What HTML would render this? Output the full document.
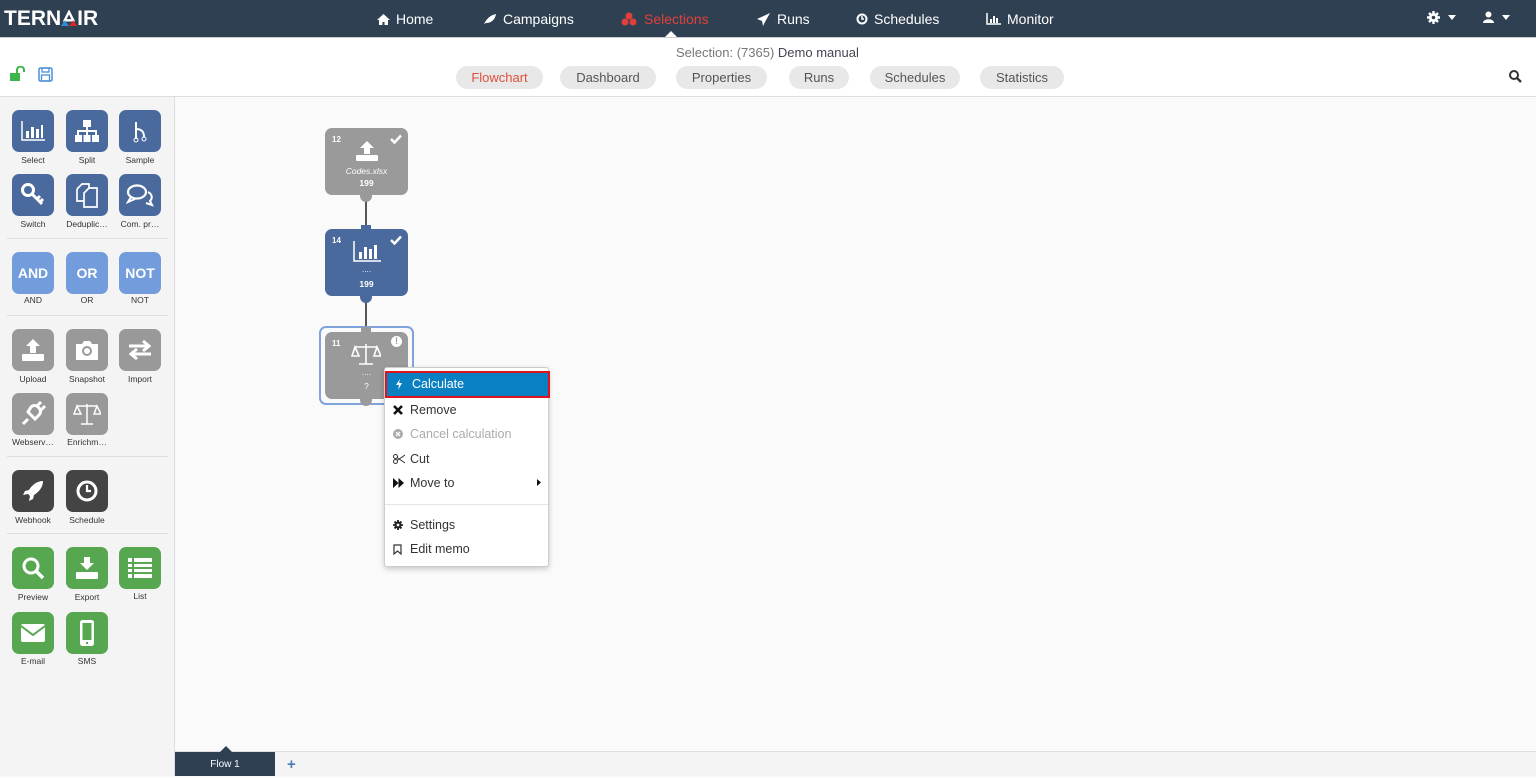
<!DOCTYPE html>
<html><head><meta charset="utf-8"><style>
*{box-sizing:border-box;margin:0;padding:0}
body{width:1536px;height:776px;overflow:hidden;font-family:"Liberation Sans",sans-serif;background:#fafafa;position:relative}
.nav{position:absolute;left:0;top:0;width:1536px;height:37px;background:#2f4052}
.logo{position:absolute;left:4px;top:7px;color:#fff;font-weight:bold;font-size:21px;letter-spacing:0px}
.ni{position:absolute;top:11px;color:#fff;font-size:14px;display:flex;align-items:center;gap:6px}
.sub{position:absolute;left:0;top:37px;width:1536px;height:60px;background:#fff;border-bottom:1px solid #ddd;border-top:1px solid #ccc}
.tab{position:absolute;top:28px;height:23px;border-radius:12px;background:#e8e8e8;color:#555;font-size:13px;text-align:center;line-height:23px}
.side{position:absolute;left:0;top:97px;width:175px;height:679px;background:#f4f4f4;border-right:1px solid #ddd}
.t{position:absolute;width:42px;height:42px;border-radius:7px;display:flex;align-items:center;justify-content:center;color:#fff}
.l{position:absolute;width:54px;text-align:center;font-size:8.5px;color:#333;white-space:nowrap;overflow:hidden}
.sep{position:absolute;left:7px;width:161px;height:1px;background:#ddd}
.b{background:#4a6a9d}.lb{background:#729cdb;font-size:14px;font-weight:bold}.g{background:#999}.d{background:#444}.gr{background:#56a74f}
.node{position:absolute;left:325px;width:83px;height:67px;border-radius:7px;color:#fff;text-align:center}
.num{position:absolute;left:7px;top:7px;font-size:8px;font-weight:bold}
.dot{position:absolute;width:12px;height:12px;border-radius:6px;left:360px}
.menu{position:absolute;left:384px;top:367px;width:165px;height:200px;background:#fff;border:1px solid #ccc;border-radius:3px;box-shadow:0 2px 6px rgba(0,0,0,.2)}
.mi{position:absolute;left:0;width:163px;height:24px;font-size:12.5px;color:#333;line-height:24px;padding-left:25px}
.mi svg{position:absolute;left:8px;top:7px}
</style></head><body>
<div class="nav">
<div class="logo">TERN<span style="position:relative;display:inline-block;width:16px;height:15px;vertical-align:-1px"><svg width="16" height="16" viewBox="0 0 17 17"><path d="M8.5 2L4 11h9z" fill="none" stroke="#fff" stroke-width="2.5"/><path d="M4 11L0 17h8.5z" fill="#2e8fd6"/><path d="M13 11l4 6H8.5z" fill="#e0262b"/></svg></span>IR</div>
<div class="ni" style="left:377px"><svg width="13" height="11"><path d="M6.5 0L0 6h2v5h3.5V8h2v3H11V6h2z" fill="#fff"/></svg>Home</div>
<div class="ni" style="left:483px"><svg width="14" height="12"><path d="M1 11C4 5 8 2 13 1C12 7 8 10 3 10" fill="#fff"/></svg>Campaigns</div>
<div class="ni" style="left:621px;color:#e0403a"><svg width="17" height="14"><circle cx="8" cy="4" r="3.5" fill="#e0403a"/><circle cx="4" cy="10" r="3.5" fill="#e0403a"/><circle cx="12" cy="10" r="3.5" fill="#e0403a"/></svg>Selections</div>
<div style="position:absolute;left:665px;top:31px;border:6px solid transparent;border-bottom-color:#fff;border-top:0"></div>
<div class="ni" style="left:757px"><svg width="14" height="13"><path d="M13 0L0 6l5 2 1 5 2-4z" fill="#fff"/></svg>Runs</div>
<div class="ni" style="left:856px"><svg width="12" height="12"><circle cx="6" cy="6" r="4.5" stroke="#fff" stroke-width="2" fill="none"/><path d="M6 3v3h2" stroke="#fff" stroke-width="1.5" fill="none"/></svg>Schedules</div>
<div class="ni" style="left:986px"><svg width="15" height="12"><path d="M1 0v11h14" stroke="#fff" stroke-width="1.5" fill="none"/><rect x="4" y="6" width="2" height="4" fill="#fff"/><rect x="7" y="3" width="2" height="7" fill="#fff"/><rect x="10" y="5" width="2" height="5" fill="#fff"/></svg>Monitor</div>
<div class="ni" style="left:1427px;gap:8px"><svg width="13" height="13" viewBox="0 0 13 13"><circle cx="6.5" cy="6.5" r="4.5" fill="#fff"/><g stroke="#fff" stroke-width="2.4"><path d="M6.5 0v13M0 6.5h13M2 2l9 9M11 2l-9 9"/></g><circle cx="6.5" cy="6.5" r="1.8" fill="#2f4052"/></svg><svg width="8" height="5"><path d="M0 0h8L4 5z" fill="#fff"/></svg></div>
<div class="ni" style="left:1483px;gap:8px"><svg width="11" height="12"><circle cx="5.5" cy="3.5" r="3" fill="#fff"/><path d="M0 12c0-5 11-5 11 0z" fill="#fff"/></svg><svg width="8" height="5"><path d="M0 0h8L4 5z" fill="#fff"/></svg></div>
</div>
<div class="sub">
<div style="position:absolute;left:676px;top:7px;font-size:13px;color:#777">Selection: (7365) <span style="color:#445">Demo manual</span></div>
<svg style="position:absolute;left:9px;top:28px" width="18" height="16"><rect x="1" y="7" width="10" height="8" fill="#3cb54a"/><path d="M8 7V4a3 3 0 0 1 7 0v2" stroke="#3cb54a" stroke-width="2" fill="none"/></svg>
<svg style="position:absolute;left:38px;top:29px" width="15" height="15"><rect x="1" y="1" width="13" height="13" rx="1.5" fill="none" stroke="#4a90d9" stroke-width="1.5"/><rect x="4" y="1" width="7" height="4" fill="none" stroke="#4a90d9" stroke-width="1.3"/><rect x="3.5" y="8" width="8" height="6" fill="none" stroke="#4a90d9" stroke-width="1.3"/></svg>
<div class="tab" style="left:456px;width:87px;color:#e0503e">Flowchart</div>
<div class="tab" style="left:560px;width:96px">Dashboard</div>
<div class="tab" style="left:676px;width:91px">Properties</div>
<div class="tab" style="left:789px;width:60px">Runs</div>
<div class="tab" style="left:870px;width:90px">Schedules</div>
<div class="tab" style="left:980px;width:84px">Statistics</div>
<svg style="position:absolute;left:1509px;top:32px" width="13" height="13"><circle cx="5" cy="5" r="4" stroke="#333" stroke-width="2" fill="none"/><path d="M8 8l4 4" stroke="#333" stroke-width="2.3"/></svg>
</div>
<div class="side">
<div class="t b" style="left:12px;top:13px"><svg width="24" height="20"><path d="M1 0v19h23" stroke="#fff" stroke-width="1.5" fill="none"/><rect x="5" y="10" width="3" height="7" fill="#fff"/><rect x="10" y="6" width="3" height="11" fill="#fff"/><rect x="15" y="8" width="3" height="9" fill="#fff"/><rect x="20" y="4" width="2" height="13" fill="#fff"/></svg></div><div class="l" style="left:6px;top:58px">Select</div>
<div class="t b" style="left:66px;top:13px"><svg width="26" height="24"><rect x="9" y="1" width="8" height="7" fill="#fff"/><path d="M13 8v4M4 16v-4h18v4M13 12v4" stroke="#fff" stroke-width="2" fill="none"/><rect x="1" y="16" width="7" height="7" fill="#fff"/><rect x="9.5" y="16" width="7" height="7" fill="#fff"/><rect x="18" y="16" width="7" height="7" fill="#fff"/></svg></div><div class="l" style="left:60px;top:58px">Split</div>
<div class="t b" style="left:119px;top:13px"><svg width="16" height="24"><path d="M4 3v17M4 10c6 0 8 3 8 8" stroke="#fff" stroke-width="2" fill="none"/><circle cx="4" cy="21" r="2" fill="none" stroke="#fff"/><circle cx="12" cy="20" r="2" fill="none" stroke="#fff"/></svg></div><div class="l" style="left:113px;top:58px">Sample</div>
<div class="t b" style="left:12px;top:77px"><svg width="26" height="26"><circle cx="8" cy="8" r="5.5" stroke="#fff" stroke-width="3" fill="none"/><path d="M12 12l10 10M17 17l3-3M20 20l3-3" stroke="#fff" stroke-width="3"/></svg></div><div class="l" style="left:6px;top:122px">Switch</div>
<div class="t b" style="left:66px;top:77px"><svg width="24" height="26"><path d="M2 7l5-5h7v5M2 7v12h7" stroke="#fff" stroke-width="1.7" fill="none"/><path d="M9 11l5-5h8v19H9z" stroke="#fff" stroke-width="1.7" fill="none"/></svg></div><div class="l" style="left:60px;top:122px">Deduplic…</div>
<div class="t b" style="left:119px;top:77px"><svg width="28" height="24"><ellipse cx="11" cy="9" rx="9" ry="6.5" stroke="#fff" stroke-width="2.2" fill="none"/><path d="M5 14l-3 5 7-3M22 9c4 2 5 6 2 9l2 4-6-2" stroke="#fff" stroke-width="2" fill="none"/></svg></div><div class="l" style="left:113px;top:122px">Com. pr…</div>
<div class="sep" style="top:141px"></div>
<div class="t lb" style="left:12px;top:155px">AND</div><div class="l" style="left:6px;top:198px">AND</div>
<div class="t lb" style="left:66px;top:155px">OR</div><div class="l" style="left:60px;top:198px">OR</div>
<div class="t lb" style="left:119px;top:155px">NOT</div><div class="l" style="left:113px;top:198px">NOT</div>
<div class="sep" style="top:218px"></div>
<div class="t g" style="left:12px;top:232px"><svg width="24" height="24"><path d="M12 1l-7 7h4v7h6V8h4z" fill="#fff"/><rect x="1" y="16" width="22" height="7" rx="1" fill="#fff"/></svg></div><div class="l" style="left:6px;top:277px">Upload</div>
<div class="t g" style="left:66px;top:232px"><svg width="26" height="22"><path d="M2 5h6l2-3h6l2 3h6v16H2z" fill="#fff"/><circle cx="13" cy="12" r="5" fill="#999"/><circle cx="13" cy="12" r="3" fill="#fff"/></svg></div><div class="l" style="left:60px;top:277px">Snapshot</div>
<div class="t g" style="left:119px;top:232px"><svg width="26" height="22"><path d="M2 7h18M16 2l6 5-6 5M24 15H6M10 10l-6 5 6 5" stroke="#fff" stroke-width="3" fill="none"/></svg></div><div class="l" style="left:113px;top:277px">Import</div>
<div class="t g" style="left:12px;top:296px"><svg width="26" height="26"><path d="M3 23l5-5M8 11l7 7 4-4c2-2 2-5 0-7l-1-1c-2-2-5-2-7 0zM16 6l5-5M20 10l5-5" stroke="#fff" stroke-width="3" fill="none"/></svg></div><div class="l" style="left:6px;top:340px">Webserv…</div>
<div class="t g" style="left:66px;top:296px"><svg width="28" height="24"><path d="M14 2v20M4 4h20M8 22h12M4 4l-3 8h7zM24 4l-3 8h7z" stroke="#fff" stroke-width="1.5" fill="none"/></svg></div><div class="l" style="left:60px;top:340px">Enrichm…</div>
<div class="sep" style="top:359px"></div>
<div class="t d" style="left:12px;top:373px"><svg width="24" height="24"><path d="M22 2c-6 0-11 4-14 9l-4 1-2 4 5-1 2 2-1 5 4-2 1-4c5-3 9-8 9-14z" fill="#fff"/></svg></div><div class="l" style="left:6px;top:418px">Webhook</div>
<div class="t d" style="left:66px;top:373px"><svg width="24" height="24"><circle cx="12" cy="12" r="9" stroke="#fff" stroke-width="3" fill="none"/><path d="M12 6v6h4" stroke="#fff" stroke-width="2.2" fill="none"/></svg></div><div class="l" style="left:60px;top:418px">Schedule</div>
<div class="sep" style="top:436px"></div>
<div class="t gr" style="left:12px;top:450px"><svg width="24" height="24"><circle cx="10" cy="10" r="7" stroke="#fff" stroke-width="3" fill="none"/><path d="M15 15l7 7" stroke="#fff" stroke-width="3.5"/></svg></div><div class="l" style="left:6px;top:495px">Preview</div>
<div class="t gr" style="left:66px;top:450px"><svg width="24" height="24"><path d="M12 14l-7-7h4V1h6v6h4z" fill="#fff"/><rect x="1" y="16" width="22" height="7" rx="1" fill="#fff"/></svg></div><div class="l" style="left:60px;top:495px">Export</div>
<div class="t gr" style="left:119px;top:450px"><svg width="26" height="22"><g fill="#fff"><rect x="1" y="1" width="4" height="4"/><rect x="7" y="1" width="18" height="4"/><rect x="1" y="7" width="4" height="3"/><rect x="7" y="7" width="18" height="3"/><rect x="1" y="12" width="4" height="3"/><rect x="7" y="12" width="18" height="3"/><rect x="1" y="17" width="4" height="4"/><rect x="7" y="17" width="18" height="4"/></g></svg></div><div class="l" style="left:113px;top:494px">List</div>
<div class="t gr" style="left:12px;top:515px"><svg width="26" height="20"><rect x="1" y="1" width="24" height="18" rx="2" fill="#fff"/><path d="M1 3l12 9 12-9" stroke="#56a74f" stroke-width="2" fill="none"/></svg></div><div class="l" style="left:6px;top:559px">E-mail</div>
<div class="t gr" style="left:66px;top:515px"><svg width="16" height="28"><rect x="1" y="1" width="14" height="26" rx="2.5" fill="#fff"/><rect x="3.5" y="4" width="9" height="17" fill="#56a74f"/><circle cx="8" cy="24" r="1.2" fill="#56a74f"/></svg></div><div class="l" style="left:60px;top:559px">SMS</div>
</div>
<div style="position:absolute;left:365px;top:196px;width:2px;height:33px;background:#555"></div>
<div style="position:absolute;left:365px;top:297px;width:2px;height:35px;background:#555"></div>
<div style="position:absolute;left:319px;top:326px;width:95px;height:79px;border:2px solid #7fa3dd;border-radius:7px"></div>
<div class="node" style="top:128px;background:#9a9a9a"><span class="num">12</span><svg style="position:absolute;right:6px;top:6px" width="12" height="10"><path d="M1 5l3.5 3.5L11 1.5" stroke="#fff" stroke-width="2.5" fill="none"/></svg>
<svg style="position:absolute;left:30px;top:12px" width="24" height="22"><path d="M12 1l-7 7h4v6h6V8h4z" fill="#fff"/><rect x="1" y="15" width="22" height="6" rx="1" fill="#fff"/></svg>
<div style="position:absolute;top:38px;width:100%;font-size:8.5px;font-style:italic">Codes.xlsx</div><div style="position:absolute;top:50px;width:100%;font-size:8.5px;font-weight:bold">199</div></div>
<div class="dot" style="top:190px;background:#9a9a9a"></div>
<div style="position:absolute;left:361px;top:225px;width:10px;height:8px;background:#4a6a9d"></div>
<div class="node" style="top:229px;background:#4a6a9d"><span class="num">14</span><svg style="position:absolute;right:6px;top:6px" width="12" height="10"><path d="M1 5l3.5 3.5L11 1.5" stroke="#fff" stroke-width="2.5" fill="none"/></svg>
<svg style="position:absolute;left:28px;top:12px" width="28" height="22"><path d="M1 0v20h27" stroke="#fff" stroke-width="1.5" fill="none"/><rect x="6" y="11" width="3" height="7" fill="#fff"/><rect x="11" y="6" width="3" height="12" fill="#fff"/><rect x="16" y="8" width="3" height="10" fill="#fff"/><rect x="21" y="4" width="3" height="14" fill="#fff"/></svg>
<div style="position:absolute;top:36px;width:100%;font-size:8px">....</div><div style="position:absolute;top:50px;width:100%;font-size:8.5px;font-weight:bold">199</div></div>
<div class="dot" style="top:291px;background:#4a6a9d"></div>
<div style="position:absolute;left:361px;top:327px;width:10px;height:8px;background:#9a9a9a"></div>
<div class="node" style="top:332px;background:#9a9a9a"><span class="num">11</span><span style="position:absolute;right:6px;top:4px;width:11px;height:11px;border-radius:6px;background:#fff;color:#9a9a9a;font-size:9px;font-weight:bold;line-height:11px">!</span>
<svg style="position:absolute;left:26px;top:10px" width="30" height="24"><path d="M15 2v20M4 5h22M8 22h14M4 5l-3 9h7zM26 5l-3 9h7z" stroke="#fff" stroke-width="1.6" fill="none"/></svg>
<div style="position:absolute;top:36px;width:100%;font-size:8px">....</div><div style="position:absolute;top:49px;width:100%;font-size:8.5px">?</div></div>
<div class="dot" style="top:394px;background:#9a9a9a"></div>
<div class="menu">
<div class="mi" style="top:3px;left:0px;width:165px;height:27px;background:#0a80c2;color:#fff;border:2px solid #e0121c;line-height:23px"><svg style="top:6px" width="8" height="11"><path d="M5 0L1 6h3l-1 5 4-7H4z" fill="#fff"/></svg>Calculate</div>
<div class="mi" style="top:30px"><svg width="10" height="10"><path d="M1 1l8 8M9 1L1 9" stroke="#111" stroke-width="2.6"/></svg>Remove</div>
<div class="mi" style="top:54px;color:#aaa"><svg width="10" height="10"><circle cx="5" cy="5" r="5" fill="#aaa"/><path d="M3 3l4 4M7 3L3 7" stroke="#fff" stroke-width="1.4"/></svg>Cancel calculation</div>
<div class="mi" style="top:79px"><svg width="12" height="10"><circle cx="2.5" cy="2.5" r="2" stroke="#333" fill="none"/><circle cx="2.5" cy="7.5" r="2" stroke="#333" fill="none"/><path d="M4 3.5L12 9M4 6.5L12 1" stroke="#333"/></svg>Cut</div>
<div class="mi" style="top:103px"><svg width="11" height="10"><path d="M0 0l5.5 5L0 10zM5.5 0L11 5l-5.5 5z" fill="#111"/></svg>Move to<svg style="left:auto;right:7px;top:8px" width="4" height="7"><path d="M0 0l4 3.5L0 7z" fill="#111"/></svg></div>
<div style="position:absolute;left:0;top:136px;width:163px;height:1px;background:#e5e5e5"></div>
<div class="mi" style="top:145px"><svg width="10" height="10" viewBox="0 0 13 13"><circle cx="6.5" cy="6.5" r="4.5" fill="#222"/><g stroke="#222" stroke-width="2.4"><path d="M6.5 0v13M0 6.5h13M2 2l9 9M11 2l-9 9"/></g><circle cx="6.5" cy="6.5" r="1.8" fill="#fff"/></svg>Settings</div>
<div class="mi" style="top:169px"><svg width="9" height="11"><path d="M1 1h7v9L4.5 7 1 10z" stroke="#333" stroke-width="1.2" fill="none"/></svg>Edit memo</div>
</div>
<div style="position:absolute;left:175px;top:751px;width:1361px;height:25px;background:#f4f4f4;border-top:1px solid #ddd"></div>
<div style="position:absolute;left:175px;top:752px;width:100px;height:24px;background:#2f4052;color:#fff;font-size:10px;text-align:center;line-height:26px">Flow 1</div>
<div style="position:absolute;left:220px;top:746px;border:6px solid transparent;border-bottom-color:#2f4052;border-top:0"></div>
<div style="position:absolute;left:287px;top:756px;color:#4a7ab5;font-size:15px;font-weight:bold">+</div>
</body></html>
